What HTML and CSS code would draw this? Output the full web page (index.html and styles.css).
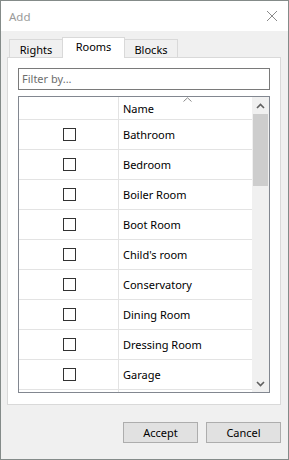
FILE: index.html
```html
<!DOCTYPE html>
<html>
<head>
<meta charset="utf-8">
<link rel="stylesheet" href="styles.css">
</head>
<body>
<div class="window">
  <div class="titlebar">
    <span class="title">Add</span>
    <svg class="close" width="12" height="12" viewBox="0 0 12 12"><path d="M1 1 L11 11 M11 1 L1 11" stroke="#8a8a8a" stroke-width="1" fill="none"/></svg>
  </div>
  <div class="content">
    <div class="tabs">
      <div class="tab">Rights</div>
      <div class="tab active">Rooms</div>
      <div class="tab">Blocks</div>
    </div>
    <div class="panel">
      <div class="filter">Filter by...</div>
      <div class="grid">
        <div class="grid-main">
          <div class="row header">
            <div class="cell check"></div>
            <div class="cell name">Name
              <svg class="sort" width="9" height="5" viewBox="0 0 9 5"><path d="M0.5 4.5 L4.5 0.8 L8.5 4.5" stroke="#8a8a8a" stroke-width="1" fill="none"/></svg>
            </div>
          </div>
          <div class="row"><div class="cell check"><span class="box"></span></div><div class="cell name">Bathroom</div></div>
          <div class="row"><div class="cell check"><span class="box"></span></div><div class="cell name">Bedroom</div></div>
          <div class="row"><div class="cell check"><span class="box"></span></div><div class="cell name">Boiler Room</div></div>
          <div class="row"><div class="cell check"><span class="box"></span></div><div class="cell name">Boot Room</div></div>
          <div class="row"><div class="cell check"><span class="box"></span></div><div class="cell name">Child's room</div></div>
          <div class="row"><div class="cell check"><span class="box"></span></div><div class="cell name">Conservatory</div></div>
          <div class="row"><div class="cell check"><span class="box"></span></div><div class="cell name">Dining Room</div></div>
          <div class="row"><div class="cell check"><span class="box"></span></div><div class="cell name">Dressing Room</div></div>
          <div class="row"><div class="cell check"><span class="box"></span></div><div class="cell name">Garage</div></div>
          <div class="row"><div class="cell check"></div><div class="cell name"></div></div>
        </div>
        <div class="scrollbar">
          <div class="arrow"><svg width="9" height="6" viewBox="0 0 9 6"><path d="M1 5 L4.5 1.5 L8 5" stroke="#606060" stroke-width="1.6" fill="none"/></svg></div>
          <div class="track"><div class="thumb"></div></div>
          <div class="arrow"><svg width="9" height="6" viewBox="0 0 9 6"><path d="M1 1 L4.5 4.5 L8 1" stroke="#606060" stroke-width="1.6" fill="none"/></svg></div>
        </div>
      </div>
    </div>
    <div class="buttons">
      <div class="btn">Accept</div>
      <div class="btn">Cancel</div>
    </div>
  </div>
</div>
</body>
</html>
```
FILE: styles.css
```css
* { box-sizing: border-box; }
html, body { margin: 0; padding: 0; }
body {
  font-family: "Noto Sans", "DejaVu Sans", sans-serif;
  font-size: 11px;
  color: #000;
  background: #fff;
}
.window {
  width: 289px;
  height: 460px;
  border: 1px solid #848b89;
  background: #f0f0f0;
  display: flex;
  flex-direction: column;
}
.titlebar {
  height: 30px;
  background: #fff;
  display: flex;
  align-items: center;
  justify-content: space-between;
  padding: 0 10px 0 8px;
}
.title { color: #9a9a9a; font-size: 11.5px; }
.close { display: block; }
.content {
  padding: 6px 7px 0 6px;
}
.tabs {
  display: flex;
  align-items: flex-end;
  height: 20px;
  margin-left: 2px;
}
.tab {
  height: 18px;
  border: 1px solid #d9d9d9;
  border-bottom: none;
  background: #f0f0f0;
  display: flex;
  align-items: center;
  justify-content: center;
  line-height: 1;
  width: 54px;
  margin-left: -1px;
  padding-top: 1px;
}
.tab:first-child { margin-left: 0; }
.tab.active {
  height: 21px;
  width: 63px;
  margin-bottom: -1px;
  background: #fff;
  position: relative;
  z-index: 1;
  padding-top: 0;
  padding-bottom: 3px;
}
.panel {
  width: 274px;
  height: 348px;
  border: 1px solid #d9d9d9;
  background: #fff;
  padding: 10px 10px 11px 10px;
}
.filter {
  height: 22px;
  border: 1px solid #7a7a7a;
  padding-left: 3px;
  line-height: 20px;
  color: #6d6d6d;
}
.grid {
  margin-top: 6px;
  height: 297px;
  border: 1px solid #828790;
  display: flex;
}
.grid-main {
  flex: 1;
  overflow: hidden;
}
.row {
  display: flex;
  height: 30px;
  border-bottom: 1px solid #e3e3e3;
}
.row.header {
  height: 23px;
}
.cell {
  display: flex;
  align-items: center;
}
.cell.check {
  width: 100px;
  border-right: 1px solid #e3e3e3;
  justify-content: center;
}
.cell.name {
  flex: 1;
  padding-left: 4px;
  position: relative;
}
.header .cell.name { padding-top: 1px; }
.sort {
  position: absolute;
  left: 64px;
  top: 0;
}
.box {
  width: 13px;
  height: 13px;
  border: 1px solid #333;
  background: #fff;
  margin-left: 1px;
}
.scrollbar {
  width: 17px;
  background: #f0f0f0;
  display: flex;
  flex-direction: column;
}
.arrow {
  height: 17px;
  display: flex;
  align-items: center;
  justify-content: center;
}
.track {
  flex: 1;
  padding: 0 1px;
}
.thumb {
  height: 72px;
  background: #cdcdcd;
}
.buttons {
  display: flex;
  justify-content: flex-end;
  gap: 8px;
  margin-top: 17px;
}
.btn {
  width: 75px;
  height: 21px;
  border: 1px solid #adadad;
  background: #e1e1e1;
  display: flex;
  align-items: center;
  justify-content: center;
}
```
